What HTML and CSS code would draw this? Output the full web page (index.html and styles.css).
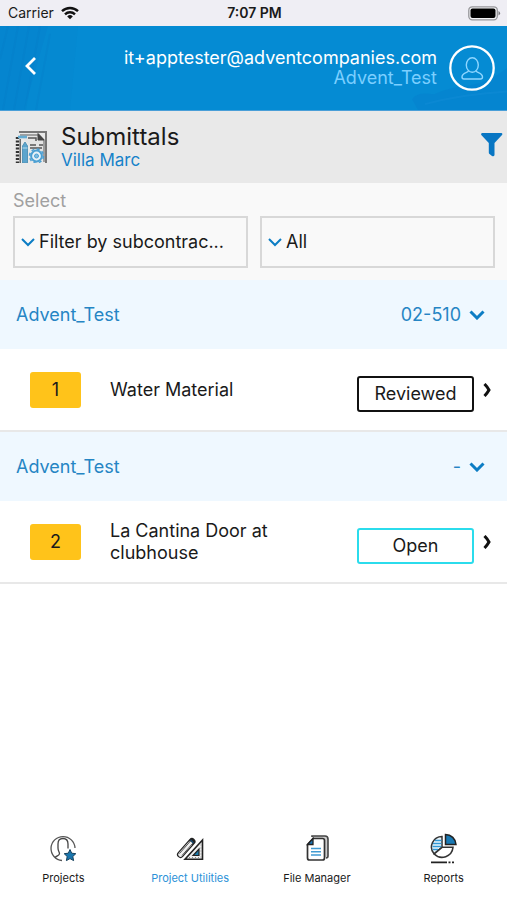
FILE: index.html
```html
<!DOCTYPE html>
<html lang="en">
<head>
<meta charset="utf-8">
<meta name="viewport" content="width=device-width, initial-scale=1">
<title>Submittals</title>
<link rel="stylesheet" href="styles.css">
</head>
<body>
<div class="status-bar">
  <div class="carrier">Carrier
    <svg width="18" height="14" viewBox="0 0 18 14" fill="none" stroke="#111" stroke-width="2.4" aria-hidden="true"><path d="M1 5.2a11.5 11.5 0 0 1 16 0M4 8.3a7.2 7.2 0 0 1 10 0"/><path d="M9 13.2 6.2 10.4a4 4 0 0 1 5.6 0z" fill="#111" stroke="none"/></svg>
  </div>
  <div class="time">7:07 PM</div>
  <svg class="battery" width="33" height="15" viewBox="0 0 33 15" aria-hidden="true"><rect x=".8" y=".8" width="28.5" height="13" rx="3.5" fill="#f4f4f6" stroke="#96969a" stroke-width="1.3"/><rect x="2.5" y="2.5" width="25" height="9.6" rx="2" fill="#000"/><path d="M30.5 5v4.5q1.6-.6 1.6-2.2T30.5 5z" fill="#77777b"/></svg>
</div>
<header class="app-header">
  <svg class="header-art" viewBox="0 0 507 86" preserveAspectRatio="none" aria-hidden="true">
    <path d="M0 0H78L70 86H0z" fill="#0878c8" opacity=".12"/>
    <path d="M0 0H48L24 86H0z" fill="#0878c8" opacity=".22"/>
    <path d="M8 0 0 34M18 0 3 86M29 0 14 86M40 0 25 86M50 8 36 86" stroke="#0870bd" stroke-width="2" opacity=".14" fill="none"/>
    <path d="M412 75q5-8 22-5 14-7 35-9 20-3 38-18V86H418z" fill="#0878c8" opacity=".28"/>
    <path d="M425 80q35-10 82-13" stroke="#1a93d9" stroke-width="2" fill="none" opacity=".3"/>
  </svg>
  <button class="icon-button back" aria-label="Back"><svg width="14" height="20" viewBox="0 0 14 20" fill="none" stroke="#fff" stroke-width="2.8"><path d="M11 2 3 10l8 8"/></svg></button>
  <div class="account">
    <div class="email">it+apptester@adventcompanies.com</div>
    <div class="company">Advent_Test</div>
  </div>
  <button class="icon-button profile" aria-label="Profile"><svg width="46" height="46" viewBox="0 0 46 46" fill="none"><circle cx="23" cy="23" r="21.7" stroke="#fff" stroke-width="2.3"/><g stroke="#8fd6ff" stroke-width="1.4"><ellipse cx="23.3" cy="20" rx="6" ry="7.2"/><path d="M19.5 26c-1 2-6.500 1.500-6.500 6q0 2 2 2h16.500q2 0 2-2c0-4.500-5.500-4-6.500-6"/></g></svg></button>
</header>
<section class="title-bar">
  <svg width="32" height="32" viewBox="0 0 32 32" fill="none" aria-hidden="true">
    <path d="M4 1h27v31" stroke="#777" stroke-width="2"/>
    <path d="M5 4h19l5 5v22" fill="#e4e4e4" stroke="#888" stroke-width="1.500"/>
    <path d="M23 2.500V9h6z" fill="#444" stroke="#444"/>
    <path d="M2.500 6v26" stroke="#333" stroke-width="3.400" stroke-dasharray="2 1.500"/><path d="M5.200 8v24" stroke="#555" stroke-width="1.300"/>
    <path d="M3 6h9" stroke="#65acd2" stroke-width="2.600"/><path d="M13 7h8v3" stroke="#555" stroke-width="1.500"/>
    <path d="M7.500 32V15L10 11l2.500 4v17z" fill="#5ba4cd" stroke="#5594b7"/><path d="M7.500 17h5" stroke="#b9dced"/>
    <path d="M15 14h6M15 17h12M24 14h4" stroke="#555" stroke-width="1.600"/>
    <circle cx="21.500" cy="25" r="7" stroke="#4ca0d3" stroke-width="1.500" stroke-dasharray="3 2.500"/>
    <circle cx="21.500" cy="25" r="5.400" fill="#e8f2f7" stroke="#4ca0d3" stroke-width="2"/><circle cx="21.500" cy="25" r="2" fill="#7fbce0" stroke="#4ca0d3"/>
  </svg>
  <div class="titles">
    <h1>Submittals</h1>
    <div class="project">Villa Marc</div>
  </div>
  <button class="icon-button funnel" aria-label="Filter"><svg width="22" height="24" viewBox="0 0 22 24"><path d="M1 0h19.500q1.500.5.5 2l-7.500 8v12q-.5 2-2.500 1l-2.500-2q-.7-.5-.7-1.500V10L.3 2Q-.3.500 1 0z" fill="#0876c3"/></svg></button>
</section>
<section class="filters">
  <label class="filter-label" for="subcontractor">Select</label>
  <div class="selects">
    <div class="select-box">
      <svg class="chevron" width="14" height="9" viewBox="0 0 14 9"><path d="m1 1 6 6 6-6"/></svg>
      <select id="subcontractor"><option>Filter by subcontrac...</option></select>
    </div>
    <div class="select-box">
      <svg class="chevron" width="14" height="9" viewBox="0 0 14 9"><path d="m1 1 6 6 6-6"/></svg>
      <select aria-label="Status"><option>All</option></select>
    </div>
  </div>
</section>
<main>
  <button class="group"><span>Advent_Test</span><span class="code">02-510</span><svg class="chevron bold" width="16" height="10" viewBox="0 0 16 10"><path d="m1.500 1.500 6.500 6.500 6.500-6.500"/></svg></button>
  <a class="item" href="#item-1">
    <span class="number">1</span><span class="name">Water Material</span><span class="state">Reviewed</span>
    <svg class="arrow" width="8" height="14" viewBox="0 0 8 14"><path d="M1.500 1q2.500 2.500 4.500 6-2 3.500-4.500 6"/></svg>
  </a>
  <button class="group"><span>Advent_Test</span><span class="code">-</span><svg class="chevron bold" width="16" height="10" viewBox="0 0 16 10"><path d="m1.500 1.500 6.500 6.500 6.500-6.500"/></svg></button>
  <a class="item" href="#item-2">
    <span class="number">2</span><span class="name">La Cantina Door at clubhouse</span><span class="state open">Open</span>
    <svg class="arrow" width="8" height="14" viewBox="0 0 8 14"><path d="M1.500 1q2.500 2.500 4.500 6-2 3.500-4.500 6"/></svg>
  </a>
</main>
<nav class="tabs">
  <a href="#projects"><svg width="30" height="32" viewBox="0 0 30 32" fill="none"><path d="M14 27.500A12 12 0 1 1 27 15" stroke="#555" stroke-width="1.300"/><path d="M7 24.500c2.500-2 4.500-2 4.500-4 0-1.500-1.500-2.500-1.500-5.500V11q0-5.500 5-5.500t5 5.500v4.500" stroke="#444" stroke-width="1.300"/><path d="m22 16.500 1.700 3.700 4.100.5-3 2.800.8 4.100-3.600-2-3.600 2 .8-4.100-3-2.800 4.100-.5z" fill="#1976ae" stroke="#153f5b"/></svg>Projects</a>
  <a href="#utilities" class="active"><svg width="30" height="32" viewBox="0 0 30 32" fill="none"><path d="M5.500 21.500 17 8.500" stroke="#222" stroke-width="7" stroke-linecap="round"/><path d="M5.500 21.500 15 10.700" stroke="#eee" stroke-width="4.600" stroke-linecap="round"/><path d="m4.500 20.500 11-12.500M7 22.500 17.500 10.500" stroke="#555" stroke-width="1"/><path d="m16.500 9 1-1" stroke="#174d74" stroke-width="4"/><path d="M27.500 7v19.200H10z" fill="#eee" stroke="#222" stroke-width="1.600"/><path d="M24 16v6.500h-6z" fill="#1a79aa" stroke="#222" stroke-width="1.200"/><path d="M14 24.500h12V11" stroke="#888" stroke-dasharray="1 2"/></svg>Project Utilities</a>
  <a href="#files"><svg width="30" height="32" viewBox="0 0 30 32" fill="none"><path d="M10 4V3h13q3 0 3 3v17q0 2-2 2" fill="#ccc" stroke="#444" stroke-width="1.600"/><path d="M11 5.500h9.500q2 0 2 2V25q0 2-2 2H7.500q-2 0-2-2V11.500z" fill="#fff" stroke="#333" stroke-width="1.700"/><path d="m11 5.500-5.500 6H11z" fill="#1a79bb" stroke="#222" stroke-width="1.300"/><path d="M9 15.500h10M9 18.700h10M9 22h10" stroke="#419bd2" stroke-width="1.500"/></svg>File Manager</a>
  <a href="#reports"><svg width="30" height="32" viewBox="0 0 30 32" fill="none"><path d="M13 3.500A10.500 10.500 0 0 0 5 20.800l8-6.500z" fill="#eaf6fd" stroke="#333" stroke-width="1.500"/><path d="M6 7.500h6.500M4 10.500h8.500M3.500 13.500h9M4 16.500h5" stroke="#3197d4" stroke-width="1.400"/><path d="M13 14.300h11A11 11 0 0 1 5.200 21z" fill="#fff" stroke="#333" stroke-width="1.600"/><path d="M16.500 1.500A10.500 10.500 0 0 1 27 11.500H16.500z" fill="#1879b4" stroke="#222" stroke-width="1.500"/><path d="M2 29.300h16M19.500 29.300h2M23 29.300h2" stroke="#222" stroke-width="1.800"/></svg>Reports</a>
</nav>
</body>
</html>
```

FILE: styles.css
```css
* { box-sizing: border-box; }
body {
  margin: 0;
  min-height: 100vh;
  display: flex;
  flex-direction: column;
  background: #fff;
  color: #1a1a1a;
  font-family: Inter, "Liberation Sans", sans-serif;
  font-size: 18px;
  line-height: 22px;
}
button, select { font: inherit; color: inherit; }
a { color: inherit; text-decoration: none; }
svg { flex: none; }
.status-bar {
  display: grid;
  grid-template-columns: 1fr auto 1fr;
  align-items: center;
  height: 26px;
  padding: 0 6px 0 8px;
  background: #efeef4;
  font-size: 14px;
}
.carrier { display: flex; align-items: center; gap: 7px; }
.time { font-weight: 600; }
.battery { justify-self: end; }
.app-header {
  position: relative;
  display: flex;
  align-items: center;
  height: 85px;
  padding: 0 12px 0 24px;
  background: #058bd3;
  border-bottom: 1px solid #4a9fd8;
}
.header-art { position: absolute; inset: 0; width: 100%; height: 100%; }
.icon-button { position: relative; display: flex; padding: 0; border: 0; background: none; }
.back { margin-bottom: 4px; }
.account {
  position: relative;
  flex: 1;
  margin-right: 12px;
  text-align: right;
  line-height: 20px;
}
.email { color: #fff; }
.company { color: #7bcfff; }
.title-bar {
  display: flex;
  align-items: center;
  height: 72px;
  padding: 0 4px 0 15px;
  background: #e9e9e9;
}
.titles { flex: 1; margin-left: 14px; }
h1 { margin: 0; font-size: 24px; line-height: 26px; font-weight: 400; }
.project { color: #1682c9; font-size: 17px; line-height: 20px; }
.funnel { margin-bottom: 4px; }
.filters { padding: 7px 12px 12px 13px; background: #f9f9f9; }
.filter-label { display: block; color: #a0a0a0; }
.selects { display: grid; grid-template-columns: 1fr 1fr; gap: 12px; margin-top: 4px; }
.select-box {
  display: flex;
  align-items: center;
  height: 52px;
  padding-left: 6px;
  border: 2px solid #d8d8d8;
}
select { flex: 1; min-width: 0; height: 100%; margin-left: 4px; padding: 0; border: 0; background: none; appearance: none; }
.chevron { fill: none; stroke: #0c7dc4; stroke-width: 2; }
.bold { stroke-width: 3; }
.group {
  display: flex;
  align-items: center;
  width: 100%;
  height: 69px;
  padding: 0 22px 0 16px;
  border: 0;
  background: #eff8ff;
  color: #2585c4;
}
.code { margin-left: auto; margin-right: 8px; }
.item {
  display: flex;
  align-items: center;
  height: 83px;
  padding: 0 16px 0 30px;
  border-bottom: 2px solid #e8e8e8;
}
.number {
  width: 51px;
  padding: 7px 0;
  border-radius: 3px;
  background: #ffc31a;
  text-align: center;
}
.name { flex: 1; margin-left: 29px; padding-right: 72px; }
.state {
  width: 117px;
  margin-top: 8px;
  padding: 5px 0;
  border: 2px solid #111;
  border-radius: 3px;
  text-align: center;
}
.open { border-color: #2bdcec; }
.arrow { margin-left: 9px; fill: none; stroke: #111; stroke-width: 3; }
.tabs {
  display: grid;
  grid-template-columns: repeat(4, 1fr);
  margin-top: auto;
  padding-bottom: 13px;
  font-size: 11px;
  line-height: 18px;
}
.tabs a { display: flex; flex-direction: column; align-items: center; gap: 4px; }
.active { color: #2b92d8; }
```
